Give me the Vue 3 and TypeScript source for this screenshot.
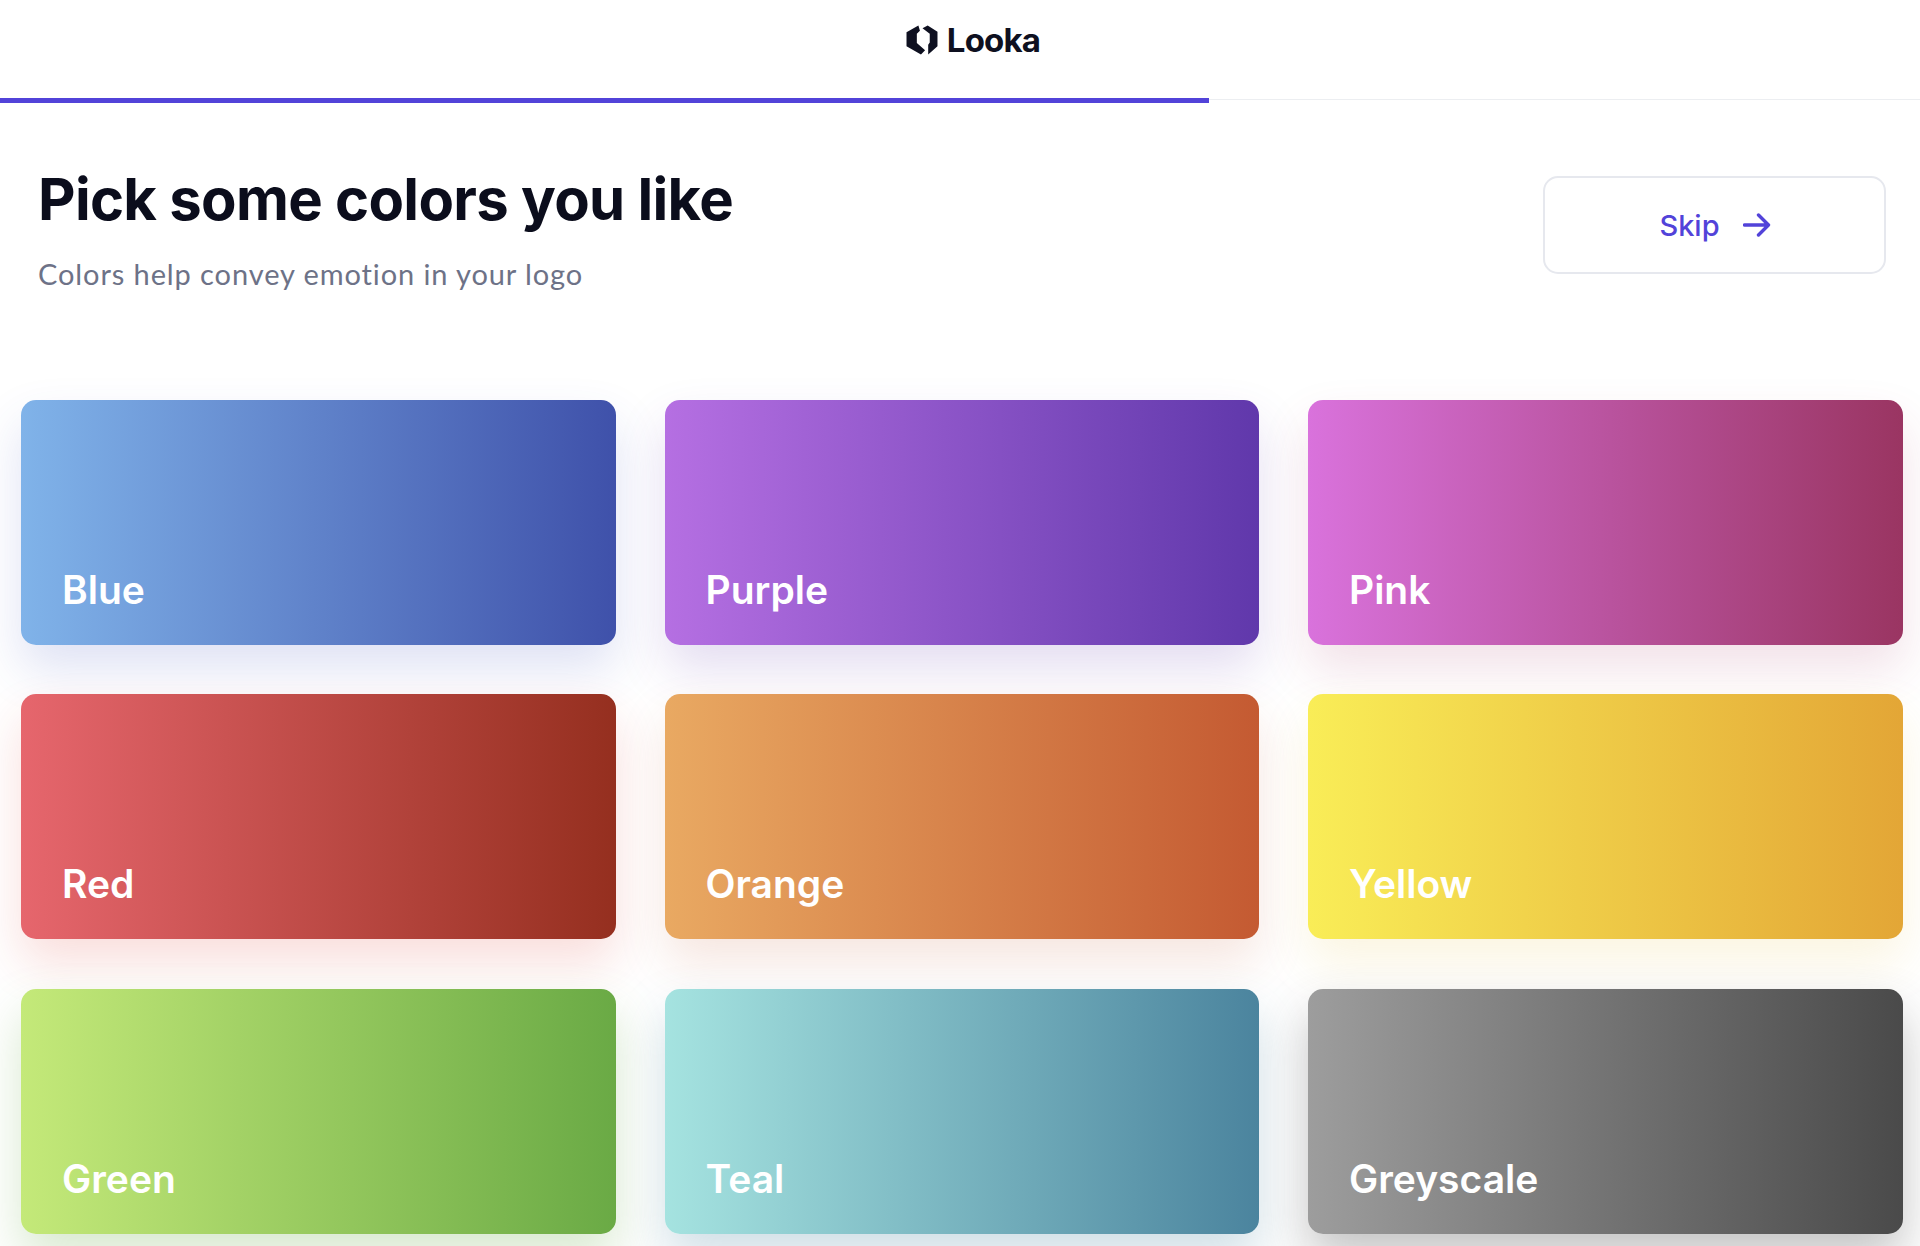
<script setup lang="ts">
interface Swatch {
  name: string
  from: string
  to: string
  glow: string
}

const swatches: Swatch[] = [
  { name: 'Blue', from: '#80b3e9', to: '#3f51aa', glow: 'rgba(63, 81, 190, 0.17)' },
  { name: 'Purple', from: '#b56fe2', to: '#6038ab', glow: 'rgba(96, 56, 171, 0.17)' },
  { name: 'Pink', from: '#d972dc', to: '#9a3562', glow: 'rgba(170, 53, 98, 0.15)' },
  { name: 'Red', from: '#e6666d', to: '#952f1f', glow: 'rgba(220, 50, 40, 0.16)' },
  { name: 'Orange', from: '#e9a962', to: '#c45a32', glow: 'rgba(196, 90, 50, 0.15)' },
  { name: 'Yellow', from: '#f9ed57', to: '#e3a636', glow: 'rgba(227, 190, 54, 0.15)' },
  { name: 'Green', from: '#c4e979', to: '#6aaa45', glow: 'rgba(106, 170, 69, 0.26)' },
  { name: 'Teal', from: '#a5e3e0', to: '#4b849e', glow: 'rgba(75, 132, 158, 0.26)' },
  { name: 'Greyscale', from: '#9d9d9d', to: '#4a4a4a', glow: 'rgba(60, 60, 60, 0.3)' },
]
</script>

<template>
  <div class="page">
    <header class="topbar">
      <div class="brand">
        <svg class="logo" viewBox="0 0 31 29" aria-hidden="true">
          <path d="M12 0.5 L0.5 7 V20.5 L14.5 28.5 L18.5 24.5 L10.5 17.5 V8.5 L13.5 5.5 Z" />
          <path d="M16 3 L21 0.5 L30.5 6.5 V20.5 L21.5 28.5 V19 L23 17 V8.5 Z" />
        </svg>
        <span class="wordmark">Looka</span>
      </div>
      <div class="track"><div class="progress"></div></div>
    </header>

    <section class="intro">
      <div>
        <h1>Pick some colors you like</h1>
        <p>Colors help convey emotion in your logo</p>
      </div>
      <button class="skip" type="button">
        <span>Skip</span>
        <svg viewBox="0 0 28 24" aria-hidden="true">
          <path d="M1.5 12 H25.5 M15.5 2 L25.5 12 L15.5 22" />
        </svg>
      </button>
    </section>

    <main class="grid">
      <div
        v-for="s in swatches"
        :key="s.name"
        class="card"
        :style="{
          background: `linear-gradient(90deg, ${s.from}, ${s.to})`,
          boxShadow: `0 24px 48px ${s.glow}`,
        }"
      >
        {{ s.name }}
      </div>
    </main>
  </div>
</template>

<style>
html,
body {
  margin: 0;
  background: #fff;
}
</style>

<style scoped>
.page {
  height: 1246px;
  overflow: hidden;
  font-family: Lato, "Noto Sans", sans-serif;
  background: #fff;
}

.topbar {
  height: 103px;
  display: flex;
  flex-direction: column;
}

.brand {
  height: 98px;
  padding-bottom: 19px;
  box-sizing: border-box;
  display: flex;
  align-items: center;
  justify-content: center;
  gap: 9px;
  padding-left: 26px;
}

.logo {
  width: 32px;
  height: 30px;
  fill: #0e1020;
}

.wordmark {
  font-family: Inter, sans-serif;
  font-weight: 700;
  font-size: 33px;
  letter-spacing: -0.8px;
  color: #0e1020;
}

.track {
  height: 5px;
  background: linear-gradient(#fff 1px, #eceef1 1px, #eceef1 2px, #fff 2px);
}

.progress {
  width: 1209px;
  height: 100%;
  background: #5243d9;
}

.intro {
  display: flex;
  justify-content: space-between;
  align-items: flex-start;
  padding: 61px 34.5px 0 38px;
  height: 296.5px;
  box-sizing: border-box;
}

h1 {
  margin: 0;
  font-family: Inter, sans-serif;
  font-size: 58px;
  line-height: 70px;
  font-weight: 700;
  letter-spacing: -0.7px;
  color: #0b0d1c;
}

p {
  margin: 21px 0 0;
  font-size: 29px;
  line-height: 38px;
  letter-spacing: 0.9px;
  color: #6d7287;
}

.skip {
  width: 343px;
  height: 98px;
  margin-top: 12px;
  padding: 0 0 0 2px;
  box-sizing: border-box;
  border: 2px solid #e6e8ee;
  border-radius: 15px;
  background: #fff;
  display: flex;
  align-items: center;
  justify-content: center;
  gap: 23px;
  font-family: Inter, sans-serif;
  font-size: 29px;
  font-weight: 500;
  color: #5243d9;
}

.skip svg {
  width: 28px;
  height: 24px;
  fill: none;
  stroke: #5243d9;
  stroke-width: 3.4;
  stroke-linecap: round;
  stroke-linejoin: round;
}

.grid {
  display: grid;
  grid-template-columns: repeat(3, 594.5px);
  grid-auto-rows: 245px;
  column-gap: 49px;
  row-gap: 49.5px;
  padding-left: 21px;
}

.card {
  border-radius: 15px;
  display: flex;
  align-items: flex-end;
  padding: 0 0 32px 41px;
  box-sizing: border-box;
  color: #fff;
  font-family: Inter, sans-serif;
  font-size: 39px;
  font-weight: 600;
  line-height: 46px;
}
</style>
